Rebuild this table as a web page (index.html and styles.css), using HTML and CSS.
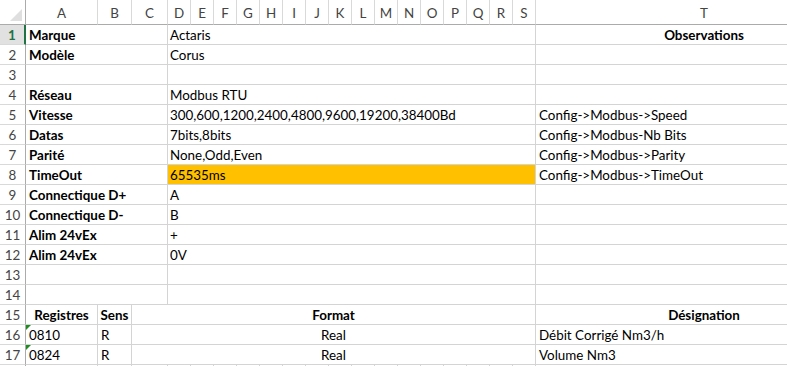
FILE: index.html
```html
<!DOCTYPE html>
<html lang="fr">
<head>
    <meta charset="UTF-8">
    <title>Modbus - Actaris Corus</title>
    <link rel="stylesheet" href="styles.css">
</head>
<body>
    <div class="viewport">
    <div class="sheet">
        <!-- en-têtes de colonnes -->
        <div class="corner"><span class="corner-mark"></span></div>
        <div class="colhead">A</div>
        <div class="colhead">B</div>
        <div class="colhead">C</div>
        <div class="colhead">D</div>
        <div class="colhead">E</div>
        <div class="colhead">F</div>
        <div class="colhead">G</div>
        <div class="colhead">H</div>
        <div class="colhead">I</div>
        <div class="colhead">J</div>
        <div class="colhead">K</div>
        <div class="colhead">L</div>
        <div class="colhead">M</div>
        <div class="colhead">N</div>
        <div class="colhead">O</div>
        <div class="colhead">P</div>
        <div class="colhead">Q</div>
        <div class="colhead">R</div>
        <div class="colhead">S</div>
        <div class="colhead">T</div>

        <!-- paramètres de communication -->
        <div class="rowhead active">1</div>
        <div class="cell label span3">Marque</div>
        <div class="cell span16">Actaris</div>
        <div class="cell label center">Observations</div>

        <div class="rowhead">2</div>
        <div class="cell label span3">Modèle</div>
        <div class="cell span16">Corus</div>
        <div class="cell"></div>

        <div class="rowhead">3</div>
        <div class="cell span3"></div>
        <div class="cell span16"></div>
        <div class="cell"></div>

        <div class="rowhead">4</div>
        <div class="cell label span3">Réseau</div>
        <div class="cell span16">Modbus RTU</div>
        <div class="cell"></div>

        <div class="rowhead">5</div>
        <div class="cell label span3">Vitesse</div>
        <div class="cell span16">300,600,1200,2400,4800,9600,19200,38400Bd</div>
        <div class="cell">Config-&gt;Modbus-&gt;Speed</div>

        <div class="rowhead">6</div>
        <div class="cell label span3">Datas</div>
        <div class="cell span16">7bits,8bits</div>
        <div class="cell">Config-&gt;Modbus-Nb Bits</div>

        <div class="rowhead">7</div>
        <div class="cell label span3">Parité</div>
        <div class="cell span16">None,Odd,Even</div>
        <div class="cell">Config-&gt;Modbus-&gt;Parity</div>

        <div class="rowhead">8</div>
        <div class="cell label span3">TimeOut</div>
        <div class="cell span16 warn">65535ms</div>
        <div class="cell">Config-&gt;Modbus-&gt;TimeOut</div>

        <div class="rowhead">9</div>
        <div class="cell label span3">Connectique D+</div>
        <div class="cell span16">A</div>
        <div class="cell"></div>

        <div class="rowhead">10</div>
        <div class="cell label span3">Connectique D-</div>
        <div class="cell span16">B</div>
        <div class="cell"></div>

        <div class="rowhead">11</div>
        <div class="cell label span3">Alim 24vEx</div>
        <div class="cell span16">+</div>
        <div class="cell"></div>

        <div class="rowhead">12</div>
        <div class="cell label span3">Alim 24vEx</div>
        <div class="cell span16">0V</div>
        <div class="cell"></div>

        <div class="rowhead">13</div>
        <div class="cell span3"></div>
        <div class="cell span16"></div>
        <div class="cell"></div>

        <div class="rowhead">14</div>
        <div class="cell span3"></div>
        <div class="cell span16"></div>
        <div class="cell"></div>

        <!-- table des registres -->
        <div class="rowhead">15</div>
        <div class="cell label center">Registres</div>
        <div class="cell label center">Sens</div>
        <div class="cell label center span17">Format</div>
        <div class="cell label center">Désignation</div>

        <div class="rowhead">16</div>
        <div class="cell flagged">0810</div>
        <div class="cell">R</div>
        <div class="cell center span17">Real</div>
        <div class="cell">Débit Corrigé Nm3/h</div>

        <div class="rowhead">17</div>
        <div class="cell flagged">0824</div>
        <div class="cell">R</div>
        <div class="cell center span17">Real</div>
        <div class="cell">Volume Nm3</div>

        <!-- haut de la ligne 18, seuls les traits de grille dépassent -->
        <div class="edge head-edge"></div>
        <div class="edge"></div><div class="edge"></div><div class="edge"></div>
        <div class="edge"></div><div class="edge"></div><div class="edge"></div><div class="edge"></div>
        <div class="edge"></div><div class="edge"></div><div class="edge"></div><div class="edge"></div>
        <div class="edge"></div><div class="edge"></div><div class="edge"></div><div class="edge"></div>
        <div class="edge"></div><div class="edge"></div><div class="edge"></div><div class="edge"></div>
        <div class="edge"></div>
    </div>
    </div>
</body>
</html>
```

FILE: styles.css
```css
body {
    margin: 0;
    background: #fff;
    font-family: 'Lato', 'Liberation Sans', sans-serif;
    font-size: 13.4px;
    color: #000;
}

.viewport {
    width: 100vw;
    height: 100vh;
    overflow: hidden;
}

.sheet {
    display: grid;
    grid-template-columns: 26px 72px 34px 36px repeat(16, 23px) 337px;
    grid-template-rows: 25px repeat(17, 20px) 1px;
    width: max-content;
}

/* en-têtes */
.corner,
.colhead,
.rowhead {
    box-sizing: border-box;
    color: #444;
    display: flex;
    align-items: center;
    justify-content: center;
}
.corner {
    border-right: 1px solid #ababab;
    border-bottom: 1px solid #ababab;
    position: relative;
}
.corner-mark {
    position: absolute;
    left: 10px;
    top: 9px;
    width: 12px;
    height: 12px;
    background: #dfdfdf;
    clip-path: polygon(100% 0, 100% 100%, 0 100%);
}
.colhead {
    border-right: 1px solid #d9d9d9;
    border-bottom: 1px solid #ababab;
    padding-top: 1px;
}
.rowhead {
    border-right: 1px solid #ababab;
    border-bottom: 1px solid #d9d9d9;
    padding-top: 1px;
}
.rowhead.active {
    background: #e1e1e1;
    color: #217346;
    font-weight: bold;
    border-right: 2px solid #217346;
}

/* cellules */
.cell {
    box-sizing: border-box;
    border-right: 1px solid #d4d4d4;
    border-bottom: 1px solid #d4d4d4;
    padding: 1px 3px 0;
    display: flex;
    align-items: center;
    white-space: nowrap;
    overflow: hidden;
}
.label {
    font-weight: bold;
}
.center {
    justify-content: center;
}
.span3 { grid-column: span 3; }
.span16 { grid-column: span 16; padding-left: 2px; }
.span17 { grid-column: span 17; }

.warn {
    background: #ffc000;
}

/* indicateur d'erreur vert (nombre stocké en texte) */
.flagged {
    position: relative;
}
.flagged::before {
    content: "";
    position: absolute;
    left: 0;
    top: 0;
    border-top: 5px solid #1e8c1e;
    border-right: 5px solid transparent;
}

/* ligne suivante tronquée */
.edge {
    box-sizing: border-box;
    border-right: 1px solid #d4d4d4;
}
.edge.head-edge {
    border-right-color: #ababab;
}
```
